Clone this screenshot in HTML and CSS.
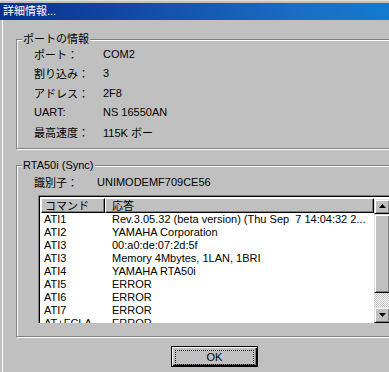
FILE: index.html
```html
<!doctype html>
<html lang="ja">
  <head>
    <meta charset="UTF-8" />
    <title>詳細情報</title>
    <link rel="stylesheet" href="styles.css">
  </head>
  <body>
    <div class="window">
      <div class="titlebar">詳細情報...</div>

      <div class="sheet">
        <div class="group port">
          <span class="legend">ポートの情報</span>
          <div class="fields">
            <span>ポート：</span><span>COM2</span>
            <span>割り込み：</span><span>3</span>
            <span>アドレス：</span><span>2F8</span>
            <span>UART:</span><span>NS 16550AN</span>
            <span>最高速度：</span><span>115K ボー</span>
          </div>
        </div>

        <div class="group modem">
          <span class="legend">RTA50i (Sync)</span>
          <div class="fields ident">
            <span>識別子：</span><span>UNIMODEMF709CE56</span>
          </div>

          <div class="listview">
            <div class="list-main">
              <div class="list-head">
                <div class="col-cmd">コマンド</div>
                <div class="col-resp">応答</div>
              </div>
              <div class="list-rows">
                <div class="row"><span class="col-cmd">ATI1</span><span class="col-resp">Rev.3.05.32 (beta version) (Thu Sep  7 14:04:32 2...</span></div>
                <div class="row"><span class="col-cmd">ATI2</span><span class="col-resp">YAMAHA Corporation</span></div>
                <div class="row"><span class="col-cmd">ATI3</span><span class="col-resp">00:a0:de:07:2d:5f</span></div>
                <div class="row"><span class="col-cmd">ATI3</span><span class="col-resp">Memory 4Mbytes, 1LAN, 1BRI</span></div>
                <div class="row"><span class="col-cmd">ATI4</span><span class="col-resp">YAMAHA RTA50i</span></div>
                <div class="row"><span class="col-cmd">ATI5</span><span class="col-resp">ERROR</span></div>
                <div class="row"><span class="col-cmd">ATI6</span><span class="col-resp">ERROR</span></div>
                <div class="row"><span class="col-cmd">ATI7</span><span class="col-resp">ERROR</span></div>
                <div class="row"><span class="col-cmd">AT+FCLA</span><span class="col-resp">ERROR</span></div>
              </div>
            </div>
            <div class="scrollbar">
              <div class="sb-btn">
                <svg width="7" height="4" viewBox="0 0 7 4"><path d="M3.5 0L7 4H0z" fill="#000"/></svg>
              </div>
              <div class="sb-thumb"></div>
              <div class="sb-track"></div>
              <div class="sb-btn">
                <svg width="7" height="4" viewBox="0 0 7 4"><path d="M0 0h7L3.5 4z" fill="#000"/></svg>
              </div>
            </div>
          </div>
        </div>

        <div class="buttons">
          <button class="btn default"><span class="focus">OK</span></button>
        </div>
      </div>
    </div>
  </body>
</html>
```

FILE: styles.css
```css
html, body {
  margin: 0;
  overflow: hidden;
  background: #c0c0c0;
}

body {
  font-family: "Liberation Sans", "Noto Sans CJK JP", sans-serif;
  font-size: 11px;
  color: #000;
}

.window {
  width: 420px;
  height: 372px;
  padding-top: 2px;
  border-top: 1px solid #dfdfdf;
  box-sizing: border-box;
}

.titlebar {
  height: 17px;
  line-height: 17px;
  padding-left: 3px;
  color: #fff;
  background: linear-gradient(to right, #0a2f8e, #1a6cc4 70%, #1080d0);
}

.sheet {
  margin-left: 2px;
  border-left: 1px solid #fff;
  padding: 19px 0 0 13px;
  height: 353px;
  box-sizing: border-box;
}

/* etched group box */
.group {
  position: relative;
  border: 1px solid #808080;
  box-shadow: 1px 1px 0 #fff, inset 1px 1px 0 #fff;
}

.legend {
  position: absolute;
  top: -8px;
  left: 5px;
  padding: 0 1px;
  line-height: 15px;
  background: #c0c0c0;
}

.port {
  height: 110px;
  box-sizing: border-box;
  padding: 4px 0 0 17px;
}

.fields {
  display: grid;
  grid-template-columns: 69px auto;
  grid-auto-rows: 19.5px;
  align-items: center;
}

.modem {
  margin-top: 16px;
  height: 172px;
  box-sizing: border-box;
  padding: 6px 0 0 17px;
}

.ident {
  grid-template-columns: 63px auto;
  margin-bottom: 3px;
}

/* list view */
.listview {
  display: flex;
  margin-left: 4px;
  height: 128px;
  box-sizing: border-box;
  border-top: 1px solid #808080;
  border-left: 1px solid #808080;
  box-shadow: inset 1px 1px 0 #000;
  padding: 2px 0 0 2px;
  background: #fff;
}

.list-main {
  width: 333px;
  overflow: hidden;
}

.list-head {
  display: flex;
  height: 15px;
  background: #c0c0c0;
}

.list-head > div {
  box-sizing: border-box;
  height: 15px;
  line-height: 14px;
  padding-left: 3px;
  border-top: 1px solid #fff;
  border-left: 1px solid #fff;
  border-right: 1px solid #000;
  border-bottom: 1px solid #000;
  box-shadow: inset -1px -1px 0 #808080;
}

.list-head .col-cmd {
  width: 64px;
}

.list-head .col-resp {
  flex: 1;
  padding-left: 6px;
}

.row {
  display: flex;
  height: 13px;
  line-height: 13px;
  white-space: pre;
}

.row .col-cmd {
  width: 68px;
  padding-left: 3px;
}

.row .col-resp {
  flex: 1;
  overflow: hidden;
}

.scrollbar {
  width: 16px;
  display: flex;
  flex-direction: column;
  margin-top: 1px;
}

.sb-btn,
.sb-thumb {
  box-sizing: border-box;
  background: #c0c0c0;
  border-top: 1px solid #dfdfdf;
  border-left: 1px solid #dfdfdf;
  border-right: 1px solid #000;
  border-bottom: 1px solid #000;
  box-shadow: inset 1px 1px 0 #fff, inset -1px -1px 0 #808080;
}

.sb-btn {
  height: 16px;
  display: flex;
  align-items: center;
  justify-content: center;
}

.sb-thumb {
  height: 80px;
}

.sb-track {
  height: 14px;
  background: repeating-conic-gradient(#c0c0c0 0 25%, #fff 0 50%) 0 0 / 2px 2px;
}

/* buttons */
.buttons {
  display: flex;
  padding: 9px 0 0 155px;
}

.btn {
  width: 87px;
  height: 21px;
  padding: 3px;
  font: inherit;
  background: #c0c0c0;
  border: 1px solid #000;
  box-shadow: inset 1px 1px 0 #fff, inset -1px -1px 0 #000, inset -2px -2px 0 #808080;
  box-sizing: border-box;
}

.focus {
  display: block;
  height: 13px;
  line-height: 12px;
  border: 1px dotted #000;
  text-align: center;
}
```
